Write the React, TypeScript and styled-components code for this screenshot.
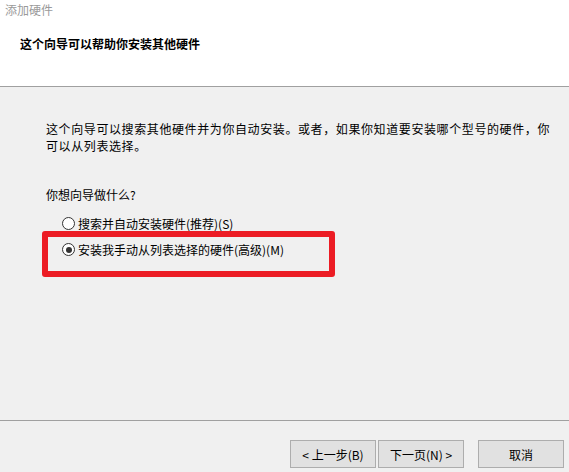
import React from "react";
import styled, { createGlobalStyle } from "styled-components";

const Global = createGlobalStyle`
  html, body { margin: 0; padding: 0; background: #f0f0f0; }
  body { font-family: "Noto Sans CJK SC", "Noto Sans", sans-serif; font-size: 12px; color: #000; }
`;

const Window = styled.div`
  width: 569px;
  height: 472px;
  display: flex;
  flex-direction: column;
  background: #f0f0f0;
  overflow: hidden;
`;

const Header = styled.div`
  height: 85px;
  background: #fff;
  border-bottom: 1px solid #a0a0a0;
  display: flex;
  flex-direction: column;
  padding: 1px 0 0 5px;
  box-sizing: content-box;
`;

const WindowTitle = styled.div`
  font-size: 12px;
  line-height: 17px;
  color: #9a9a9a;
`;

const HeaderTitle = styled.div`
  margin: 17px 0 0 15px;
  font-size: 12px;
  line-height: 17px;
  font-weight: 700;
`;

const Content = styled.div`
  flex: 1;
  position: relative;
  padding: 33px 0 0 46px;
`;

const Paragraph = styled.p`
  margin: 0;
  width: 512px;
  font-size: 12px;
  line-height: 17px;
  letter-spacing: 0.6px;
`;

const Question = styled.div`
  margin-top: 32px;
  font-size: 12px;
  line-height: 17px;
`;

const Options = styled.div`
  margin-top: 12px;
  margin-left: 16px;
  display: flex;
  flex-direction: column;
  gap: 9px;
`;

const Option = styled.label`
  display: flex;
  align-items: center;
  gap: 3px;
  height: 17px;
  line-height: 17px;
`;

const Radio = styled.span<{ $checked?: boolean }>`
  width: 11px;
  height: 11px;
  border: 1px solid #333;
  border-radius: 50%;
  background: #fff;
  display: flex;
  align-items: center;
  justify-content: center;
  &::after {
    content: "";
    width: 6px;
    height: 6px;
    border-radius: 50%;
    background: ${(p) => (p.$checked ? "#333" : "transparent")};
  }
`;

const Highlight = styled.div`
  position: absolute;
  left: 42px;
  top: 144px;
  width: 281px;
  height: 34px;
  border: 6px solid #ec1c24;
  border-radius: 3px;
  pointer-events: none;
`;

const Footer = styled.div`
  height: 52px;
  border-top: 1px solid #a0a0a0;
  display: flex;
  justify-content: flex-end;
  align-items: flex-start;
  padding: 19px 5px 0 0;
  box-sizing: border-box;
`;

const ButtonGroup = styled.div`
  display: flex;
  gap: 2px;
  margin-right: 14px;
`;

const Button = styled.button`
  width: 86px;
  height: 28px;
  box-sizing: border-box;
  border: 1px solid #adadad;
  background: #e1e1e1;
  font-family: inherit;
  font-size: 12px;
  color: #000;
  padding: 0;
  display: flex;
  align-items: center;
  justify-content: center;
`;

export default function App() {
  return (
    <>
      <Global />
      <Window>
        <Header>
          <WindowTitle>添加硬件</WindowTitle>
          <HeaderTitle>这个向导可以帮助你安装其他硬件</HeaderTitle>
        </Header>
        <Content>
          <Paragraph>
            这个向导可以搜索其他硬件并为你自动安装。或者，如果你知道要安装哪个型号的硬件，你可以从列表选择。
          </Paragraph>
          <Question>你想向导做什么?</Question>
          <Options>
            <Option>
              <Radio />
              搜索并自动安装硬件(推荐)(S)
            </Option>
            <Option>
              <Radio $checked />
              安装我手动从列表选择的硬件(高级)(M)
            </Option>
          </Options>
          <Highlight />
        </Content>
        <Footer>
          <ButtonGroup>
            <Button>&lt; 上一步(B)</Button>
            <Button>下一页(N) &gt;</Button>
          </ButtonGroup>
          <Button>取消</Button>
        </Footer>
      </Window>
    </>
  );
}
